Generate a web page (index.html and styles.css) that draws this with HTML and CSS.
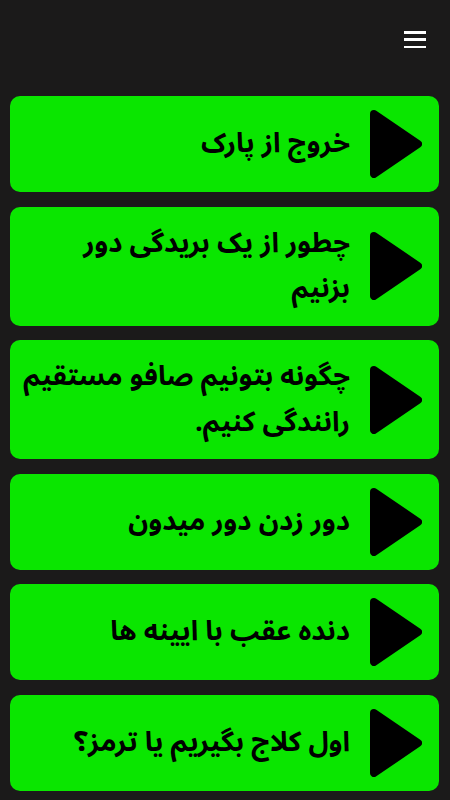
FILE: index.html
```html
<!DOCTYPE html>
<html lang="fa" dir="rtl">
<head>
<meta charset="utf-8">
<title>آموزش رانندگی</title>
<link rel="stylesheet" href="styles.css">
</head>
<body>
<header class="topbar">
  <button class="menu" aria-label="منو">
    <span class="bar"></span><span class="bar"></span><span class="bar"></span>
  </button>
</header>
<main class="list">
  <a class="card" href="#">
    <svg class="play" viewBox="0 0 52 68"><path d="M4 4 L48 34 L4 64 Z"/></svg>
    <span class="title">خروج از پارک</span>
  </a>
  <a class="card" href="#">
    <svg class="play" viewBox="0 0 52 68"><path d="M4 4 L48 34 L4 64 Z"/></svg>
    <span class="title nowrap">چطور از یک بریدگی دور<br>بزنیم</span>
  </a>
  <a class="card" href="#">
    <svg class="play" viewBox="0 0 52 68"><path d="M4 4 L48 34 L4 64 Z"/></svg>
    <span class="title nowrap">چگونه بتونیم صافو مستقیم<br>رانندگی کنیم.</span>
  </a>
  <a class="card" href="#">
    <svg class="play" viewBox="0 0 52 68"><path d="M4 4 L48 34 L4 64 Z"/></svg>
    <span class="title">دور زدن دور میدون</span>
  </a>
  <a class="card" href="#">
    <svg class="play" viewBox="0 0 52 68"><path d="M4 4 L48 34 L4 64 Z"/></svg>
    <span class="title">دنده عقب با ایینه ها</span>
  </a>
  <a class="card" href="#">
    <svg class="play" viewBox="0 0 52 68"><path d="M4 4 L48 34 L4 64 Z"/></svg>
    <span class="title">اول کلاج بگیریم یا ترمز؟</span>
  </a>
</main>
</body>
</html>
```
FILE: styles.css
```css
html, body {
  margin: 0;
  padding: 0;
  background: #1b1a1a;
}
body {
  font-family: "Noto Sans Arabic", "DejaVu Sans", sans-serif;
  width: 450px;
  min-height: 800px;
}
.topbar {
  height: 82px;
  display: flex;
  justify-content: flex-start;
  align-items: flex-start;
  padding: 0 24px;
}
.menu {
  margin-top: 31px;
  width: 22px;
  height: 17px;
  padding: 0;
  border: 0;
  background: transparent;
  display: flex;
  flex-direction: column;
  justify-content: space-between;
}
.bar {
  display: block;
  width: 22px;
  height: 2.5px;
  background: #ffffff;
}
.list {
  display: flex;
  flex-direction: column;
  gap: 14.5px;
  padding: 14px 11px 0 10px;
}
.card {
  display: flex;
  align-items: center;
  gap: 20px;
  background: #0ae600;
  border-radius: 10px;
  padding: 14px 17px 14px 8px;
  min-height: 68px;
  text-decoration: none;
  color: #000;
}
.play {
  flex: none;
  width: 52px;
  height: 68px;
  fill: #000;
  stroke: #000;
  stroke-width: 8;
  stroke-linejoin: round;
}
.title {
  flex: 1;
  min-width: 0;
  font-size: 27.5px;
  font-weight: bold;
  line-height: 45.5px;
  text-align: right;
}
.nowrap {
  white-space: nowrap;
}
```
